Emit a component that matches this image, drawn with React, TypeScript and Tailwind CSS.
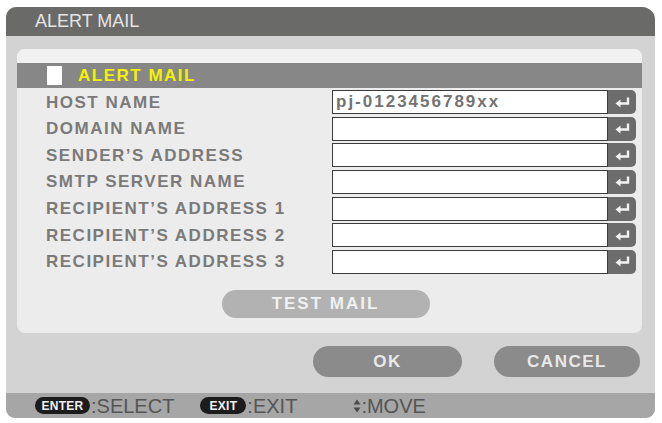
import React from "react";

const rows = [
  { label: "HOST NAME", value: "pj-0123456789xx" },
  { label: "DOMAIN NAME", value: "" },
  { label: "SENDER\u2019S ADDRESS", value: "" },
  { label: "SMTP SERVER NAME", value: "" },
  { label: "RECIPIENT\u2019S ADDRESS 1", value: "" },
  { label: "RECIPIENT\u2019S ADDRESS 2", value: "" },
  { label: "RECIPIENT\u2019S ADDRESS 3", value: "" },
];

const EnterIcon = () => (
  <svg width="17" height="13" viewBox="0 0 17 13" fill="none">
    <path d="M14 1.5 V7.5 H5.5" stroke="#f2f2f2" strokeWidth="2.4" />
    <path d="M1.5 7.5 L6.5 3.5 V11.5 Z" fill="#f2f2f2" />
  </svg>
);

const MoveIcon = () => (
  <svg width="8" height="14" viewBox="0 0 8 14">
    <path d="M4 0.5 L7.5 5.5 H0.5 Z" fill="#4a4a4a" />
    <path d="M4 13.5 L7.5 8.5 H0.5 Z" fill="#4a4a4a" />
  </svg>
);

export default function App() {
  return (
    <div
      className="w-[662px] h-[423px] bg-white pt-[7px] pl-[6px] pr-[7px] pb-[5px]"
      style={{ fontFamily: '"Liberation Sans", Arial, sans-serif' }}
    >
      <div className="h-full flex flex-col rounded-tl-[10px] rounded-tr-[13px] rounded-b-[9px] overflow-hidden bg-[#d3d3d3]">
        {/* title */}
        <div className="h-[29px] shrink-0 bg-[#6a6a68] pl-[29px] flex items-center text-[18px] text-[#e4e4e4]">
          ALERT MAIL
        </div>

        {/* body */}
        <div className="flex-1 flex flex-col pl-[11px] pr-[13px] pt-[13px]">
          <div className="h-[284px] bg-[#ececec] rounded-[8px] overflow-hidden flex flex-col">
            <div className="h-[14px] bg-[#f1f1f1]" />
            <div className="h-[25px] bg-[#878787] flex items-center pl-[30px]">
              <div className="w-[15px] h-[19px] bg-white" />
              <span className="ml-[16px] text-[17px] font-bold tracking-[1.5px] text-[#f2f200]">
                ALERT MAIL
              </span>
            </div>

            <div className="mt-[2px] flex flex-col gap-[2.67px] pl-[29px] pr-[6px]">
              {rows.map((r) => (
                <div key={r.label} className="h-[24px] flex items-center">
                  <div className="w-[286px] text-[17px] font-bold tracking-[1.5px] text-[#7a7a7a] leading-none">
                    {r.label}
                  </div>
                  <div className="w-[276px] h-[24px] bg-white border border-[#3c3c3c] flex items-center pl-[3px] text-[17px] font-bold tracking-[2px] text-[#737373]">
                    {r.value}
                  </div>
                  <div className="w-[28px] h-[24px] bg-[#6c6c6c] rounded-r-[5px] flex items-center justify-center">
                    <EnterIcon />
                  </div>
                </div>
              ))}
            </div>

            <div className="mt-[16px] flex justify-center pr-[8px]">
              <div className="w-[208px] h-[28px] rounded-full bg-[#b2b2b2] flex items-center justify-center text-[17px] font-bold tracking-[2px] text-[#f0f0f0]">
                TEST MAIL
              </div>
            </div>
          </div>

          <div className="mt-[13px] flex justify-end gap-[32px] pr-[2px]">
            <div className="w-[149px] h-[31px] rounded-full bg-[#8b8b8b] flex items-center justify-center text-[17px] font-bold tracking-[1.5px] text-[#e8e8e8]">
              OK
            </div>
            <div className="w-[146px] h-[31px] rounded-full bg-[#8b8b8b] flex items-center justify-center text-[17px] font-bold tracking-[1.5px] text-[#e8e8e8]">
              CANCEL
            </div>
          </div>
        </div>

        {/* footer */}
        <div className="h-[25px] shrink-0 bg-[#a6a6a6] flex items-center pl-[29px] text-[20px] text-[#555555]">
          <div className="w-[55px] h-[17px] rounded-full bg-[#1c1c1c] flex items-center justify-center text-[12px] font-bold text-[#f0f0f0] tracking-[0.3px]">
            ENTER
          </div>
          <span className="ml-[1px]">:SELECT</span>
          <div className="ml-[26px] w-[46px] h-[17px] rounded-full bg-[#1c1c1c] flex items-center justify-center text-[12px] font-bold text-[#f0f0f0] tracking-[0.3px]">
            EXIT
          </div>
          <span className="ml-[1px]">:EXIT</span>
          <div className="ml-[56px] flex items-center">
            <MoveIcon />
            <span>:MOVE</span>
          </div>
        </div>
      </div>
    </div>
  );
}
